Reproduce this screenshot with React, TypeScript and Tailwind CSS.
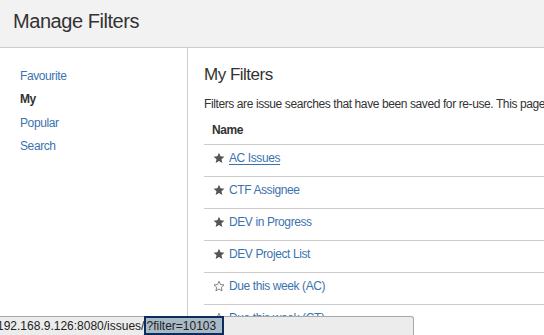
import React from "react";

const FilledStar = () => (
  <svg width="12" height="12" viewBox="0 0 24 24" className="shrink-0">
    <path d="M12 1.5l3.1 7.1 7.7.7-5.8 5.1 1.7 7.6L12 18l-6.7 4 1.7-7.6L1.2 9.3l7.7-.7z" fill="#555" />
  </svg>
);

const OutlineStar = () => (
  <svg width="12" height="12" viewBox="0 0 24 24" className="shrink-0">
    <path d="M12 2.5l2.9 6.6 7.1.7-5.4 4.8 1.6 7.1L12 18l-6.2 3.7 1.6-7.1L2 9.8l7.1-.7z" fill="none" stroke="#666" strokeWidth="1.6" strokeLinejoin="round" />
  </svg>
);

const rows: { name: string; fav: boolean; underline?: boolean }[] = [
  { name: "AC Issues", fav: true, underline: true },
  { name: "CTF Assignee", fav: true },
  { name: "DEV in Progress", fav: true },
  { name: "DEV Project List", fav: true },
  { name: "Due this week (AC)", fav: false },
  { name: "Due this week (CT)", fav: false },
];

export default function App() {
  return (
    <div
      className="relative w-[544px] h-[335px] overflow-hidden bg-white text-[#333]"
      style={{ fontFamily: '"Liberation Sans", Arial, sans-serif' }}
    >
      <div className="h-[48px] bg-[#f2f2f2] border-b border-[#ccc] flex items-center pl-[13px] pb-[6px]">
        <h1 className="text-[20px] leading-none tracking-[-0.45px] text-[#333]">Manage Filters</h1>
      </div>
      <div className="flex h-[287px]">
        <div className="w-[188px] shrink-0 border-r border-[#ccc] pt-[16px] pl-[20px] text-[12px] tracking-[-0.4px]">
          <div className="h-[23.5px] flex items-center text-[#3b73af]">Favourite</div>
          <div className="h-[23.5px] flex items-center font-bold text-[#333]">My</div>
          <div className="h-[23.5px] flex items-center text-[#3b73af]">Popular</div>
          <div className="h-[23.5px] flex items-center text-[#3b73af]">Search</div>
        </div>
        <div className="flex-1 pl-[16px] pt-[17px] min-w-0 tracking-[-0.4px]">
          <h2 className="text-[17px] leading-[20px] tracking-[-0.5px] text-[#333] whitespace-nowrap">My Filters</h2>
          <p className="mt-[12px] text-[12px] leading-[14px] whitespace-nowrap">
            Filters are issue searches that have been saved for re-use. This page shows all the filters you own.
          </p>
          <div className="h-[34px] border-b border-[#ccc] flex items-center pt-[5px] pl-[8px] text-[12px] font-bold">
            Name
          </div>
          {rows.map((r) => (
            <div key={r.name} className="h-[32px] border-b border-[#ccc] flex items-center pl-[9px] gap-[4px] pb-[6px] text-[12px]">
              {r.fav ? <FilledStar /> : <OutlineStar />}
              <span className={"text-[#3b73af] whitespace-nowrap " + (r.underline ? "underline underline-offset-2" : "")}>
                {r.name}
              </span>
            </div>
          ))}
        </div>
      </div>
      <div className="absolute left-0 top-[316px] w-[414px] h-[19px] bg-[#ececec] border border-l-0 border-b-0 border-[#a8a8a8] rounded-tr-[3px] flex items-center text-[12px] text-[#222] whitespace-nowrap">
        <span className="-ml-[3px]">192.168.9.126:8080/issues/</span>
        <span className="h-[19px] flex items-center bg-[#a9bac6] border-2 border-[#0b2d5e] pr-[6px] -mt-[1px]">?filter=10103</span>
      </div>
    </div>
  );
}
